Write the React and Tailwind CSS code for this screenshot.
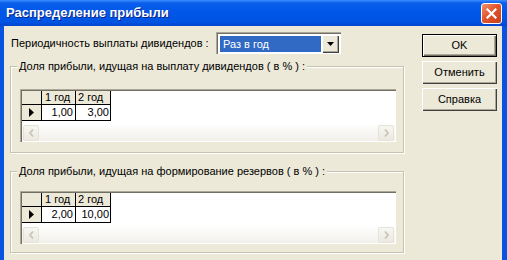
import React from 'react';

const CloseButton = () => (
  <div className="w-[21px] h-[21px] rounded-[3px] border border-white bg-[linear-gradient(135deg,#f0906e_0%,#e2552c_45%,#c8401c_100%)] flex items-center justify-center">
    <svg width="11" height="11" viewBox="0 0 11 11">
      <path d="M1.5 1.5 L9.5 9.5 M9.5 1.5 L1.5 9.5" stroke="white" strokeWidth="2.2" strokeLinecap="square" />
    </svg>
  </div>
);

const TitleBar = () => (
  <div className="h-[26px] flex items-center justify-between pl-[6px] pr-[5px] bg-[linear-gradient(to_bottom,#3c8eff_0px,#0a5eea_3px,#0057e8_12px,#0054e3_22px,#0046cc_26px)]">
    <span className="text-white font-bold text-[13px] [text-shadow:1px_1px_0_#0c2488]">
      Распределение прибыли
    </span>
    <CloseButton />
  </div>
);

const ComboBox = () => (
  <div className="w-[125px] h-[22px] flex p-[2px] bg-white border-t border-l border-[#aca899] border-r-white border-b-white shadow-[inset_1px_1px_0_#716f64]">
    <div className="flex-1 flex items-center pl-[3px] ml-[1px] mt-[1px] h-[16px] bg-[#316ac5] text-white">Раз в год</div>
    <div className="w-[17px] h-[18px] ml-[1px] flex items-center justify-center bg-[#ece9d8] shadow-[inset_1px_1px_0_#ffffff,inset_-1px_-1px_0_#404040,inset_-2px_-2px_0_#aca899]">
      <svg width="7" height="4" viewBox="0 0 7 4">
        <polygon points="0,0 7,0 3.5,4" fill="black" />
      </svg>
    </div>
  </div>
);

const ScrollArrow = ({ dir }) => (
  <div className="w-[16px] h-[16px] rounded-[2px] border border-[#e5e3d7] bg-[linear-gradient(to_bottom,#f7f6f1,#ebe9e0)] flex items-center justify-center">
    <svg width="5" height="8" viewBox="0 0 5 8">
      <path d={dir === 'left' ? 'M4 0.5 L1 4 L4 7.5' : 'M1 0.5 L4 4 L1 7.5'} stroke="#c9c6b8" strokeWidth="1.8" fill="none" />
    </svg>
  </div>
);

const Grid = ({ a, b }) => (
  <div className="w-[376px] h-[53px] flex flex-col bg-white border-t border-l border-[#aca899] border-r-white border-b-white shadow-[inset_1px_1px_0_#716f64]">
    <div className="flex h-[15px] pt-[1px] pl-[1px]">
      <div className="w-[20px] bg-[#ece9d8] border-r border-b border-black" />
      <div className="w-[34px] bg-[#ece9d8] border-r border-b border-black pl-[3px] leading-[13px]">1 год</div>
      <div className="w-[35px] bg-[#ece9d8] border-r border-b border-black pl-[2px] leading-[13px]">2 год</div>
    </div>
    <div className="flex h-[16px] pl-[1px]">
      <div className="w-[20px] bg-[#ece9d8] border-r border-b border-black flex items-center justify-center">
        <svg width="5" height="9" viewBox="0 0 5 9">
          <polygon points="0,0 5,4.5 0,9" fill="black" />
        </svg>
      </div>
      <div className="w-[34px] border-r border-b border-black text-right pr-[2px] leading-[15px]">{a}</div>
      <div className="w-[35px] border-r border-b border-black text-right pr-[1px] leading-[15px]">{b}</div>
    </div>
    <div className="flex-1" />
    <div className="h-[17px] mx-[1px] mb-[1px] flex items-center justify-between px-[1px] bg-[linear-gradient(to_bottom,#fefefe,#f1f0ea)]">
      <ScrollArrow dir="left" />
      <ScrollArrow dir="right" />
    </div>
  </div>
);

const GroupBox = ({ label, height, padTop, children }) => (
  <div
    className={`relative w-[394px] border border-[#c5c2b2] shadow-[inset_1px_1px_0_#ffffff,1px_1px_0_#ffffff] pl-[9px] ${height} ${padTop}`}
  >
    <span className="absolute top-[-7px] left-[6px] px-[2px] bg-[#ece9d8] leading-[13px] whitespace-nowrap">{label}</span>
    {children}
  </div>
);

const Button = ({ children, def }) => (
  <div
    className={`w-[75px] h-[23px] flex items-center justify-center bg-[#ece9d8] ${
      def
        ? 'border border-black shadow-[inset_1px_1px_0_#ffffff,inset_-1px_-1px_0_#716f64,inset_-2px_-2px_0_#aca899]'
        : 'shadow-[inset_1px_1px_0_#ffffff,inset_-1px_-1px_0_#404040,inset_-2px_-2px_0_#aca899]'
    }`}
  >
    {children}
  </div>
);

export default function App() {
  return (
    <div className="w-[507px] h-[260px] overflow-hidden flex flex-col bg-[#0853e0] text-[11px] text-black font-['Liberation_Sans',Arial,sans-serif]">
      <TitleBar />
      <div className="flex-1 flex ml-[4px] mr-[5px] bg-[#ece9d8]">
        <div className="w-[400px] flex flex-col pl-[6px] pt-[6px]">
          <div className="flex items-center h-[22px]">
            <span className="w-[206px] pl-[1px]">Периодичность выплаты дивидендов :</span>
            <ComboBox />
          </div>
          <div className="mt-[12px]">
            <GroupBox label="Доля прибыли, идущая на выплату дивидендов ( в % ) :" height="h-[87px]" padTop="pt-[22px]">
              <Grid a="1,00" b="3,00" />
            </GroupBox>
          </div>
          <div className="mt-[18px]">
            <GroupBox label="Доля прибыли, идущая на формирование резервов ( в % ) :" height="h-[82px]" padTop="pt-[19px]">
              <Grid a="2,00" b="10,00" />
            </GroupBox>
          </div>
        </div>
        <div className="flex flex-col gap-[4px] pl-[18px] pt-[8px]">
          <Button def>OK</Button>
          <Button>Отменить</Button>
          <Button>Справка</Button>
        </div>
      </div>
    </div>
  );
}
